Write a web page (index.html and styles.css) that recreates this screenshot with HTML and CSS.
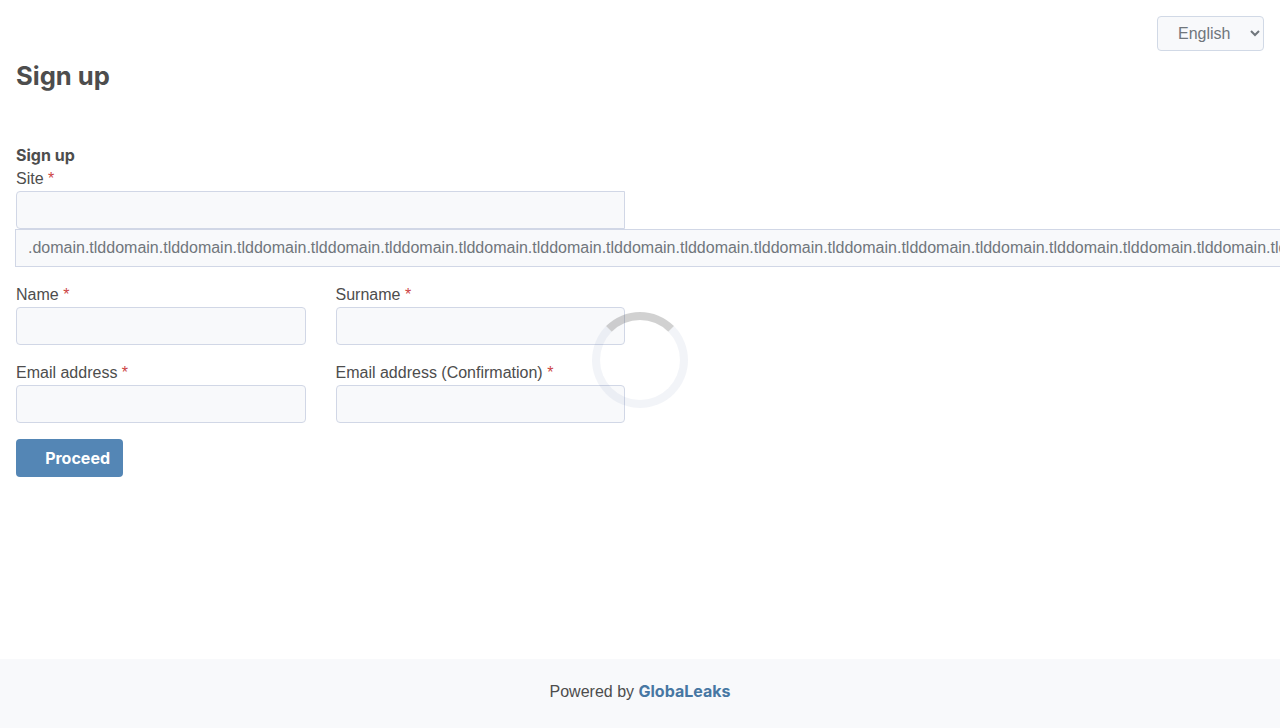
FILE: index.html
```html
<!DOCTYPE html>
<html lang="en">
<head>
<meta charset="utf-8">
<title>Sign up</title>
<link rel="stylesheet" href="styles.css">
</head>
<body>
<header class="header">
  <select class="language" aria-label="Language"><option>English</option></select>
</header>
<main class="content">
  <h1 class="page-title">Sign up</h1>
  <form class="signup">
    <h2 class="form-title">Sign up</h2>
    <label class="field site"><span>Site <b class="required">*</b></span><input class="input" type="text"></label>
    <div class="domain">.domain.tlddomain.tlddomain.tlddomain.tlddomain.tlddomain.tlddomain.tlddomain.tlddomain.tlddomain.tlddomain.tlddomain.tlddomain.tlddomain.tlddomain.tlddomain.tlddomain.tlddomain.tld</div>
    <div class="fields">
      <label class="field"><span>Name <b class="required">*</b></span><input class="input" type="text"></label>
      <label class="field"><span>Surname <b class="required">*</b></span><input class="input" type="text"></label>
      <label class="field"><span>Email address <b class="required">*</b></span><input class="input" type="email"></label>
      <label class="field"><span>Email address (Confirmation) <b class="required">*</b></span><input class="input" type="email"></label>
    </div>
    <button class="proceed" type="button">Proceed</button>
  </form>
</main>
<footer class="footer"><span>Powered by <a class="brand">GlobaLeaks</a></span></footer>
<div class="overlay"><div class="spinner"></div></div>
</body>
</html>
```

FILE: styles.css
```css
* { box-sizing: border-box; }
body {
  margin: 0;
  height: 728px;
  display: flex;
  flex-direction: column;
  overflow: hidden;
  background: #fff;
  color: #4d4d4d;
  font: 16px/24px "Liberation Sans", Arial, sans-serif;
}
.header { display: flex; justify-content: flex-end; padding: 16px 16px 0; }
.language {
  width: 107px;
  height: 35px;
  padding: 0 0 0 16px;
  border: 1px solid #d1d9e6;
  border-radius: 4px;
  background: #f8f9fb;
  color: #70767c;
  font: inherit;
}
.content { flex: 1; padding: 9px 16px 0; }
.page-title { margin: 0; font: 700 25.6px/32px Inter, sans-serif; }
.signup { width: 609px; margin-top: 52px; }
.form-title { margin: 0; font: 700 16px/23px Inter, sans-serif; }
.field { display: flex; flex-direction: column; }
.required { color: #cc4444; font-weight: 400; }
.input {
  width: 100%;
  height: 38px;
  border: 1px solid #d1d7e6;
  border-radius: 4px;
  background: #f8f9fb;
}
.site .input { border-radius: 4px 0 0 4px; }
.domain {
  width: calc(100vw - 15px);
  height: 38px;
  margin-left: -1px;
  padding: 6px 0 6px 12px;
  overflow: hidden;
  border: 1px solid #d1d7e6;
  border-right: 0;
  background: #f8f9fb;
  color: #70767c;
  white-space: nowrap;
}
.fields { display: grid; grid-template-columns: 1fr 1fr; gap: 16px 30px; margin-top: 16px; }
.proceed {
  width: 107px;
  height: 38px;
  margin-top: 16px;
  padding: 0 13px 0 0;
  border: 0;
  border-radius: 4px;
  background: #5486b5;
  color: #fff;
  font: 700 16px/24px Inter, sans-serif;
  text-align: right;
}
.footer {
  display: flex;
  justify-content: center;
  height: 69.5px;
  padding-top: 20px;
  background: #f8f9fb;
}
.brand { color: #4777a3; font-family: Inter, sans-serif; font-weight: 700; }
.overlay {
  position: absolute;
  inset: 0 0 8px;
  display: flex;
  align-items: center;
  justify-content: center;
  pointer-events: none;
}
.spinner {
  width: 96px;
  height: 96px;
  border: 8px solid rgba(70, 100, 160, .065);
  border-top-color: rgba(85, 85, 85, .27);
  border-radius: 50%;
}
```
